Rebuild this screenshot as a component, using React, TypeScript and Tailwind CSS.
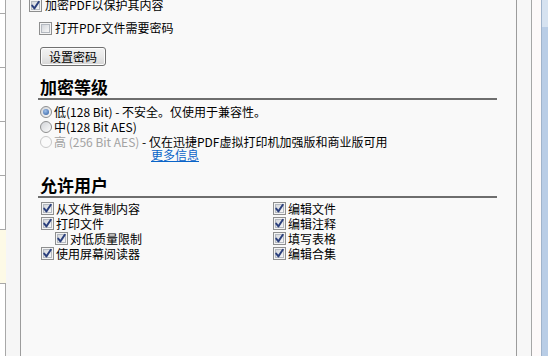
import type { ReactNode } from 'react';

function CheckBox({ checked = false }: { checked?: boolean }) {
  return (
    <span className="relative flex h-[13px] w-[13px] shrink-0 items-center justify-center border border-[#8e8f8f] bg-[#f4f4f4]">
      <span className="h-[9px] w-[9px] border border-[#b4b9c0] bg-gradient-to-br from-[#d4d7dc] to-[#f7f7f7]" />
      {checked && (
        <svg viewBox="0 0 13 13" className="absolute -left-px -top-px h-[13px] w-[13px]">
          <path d="M3.2 6.6 L5.4 9.4 L9.8 2.8" fill="none" stroke="#2a3f7c" strokeWidth="1.9" strokeLinecap="round" strokeLinejoin="round" />
        </svg>
      )}
    </span>
  );
}

function Radio({ selected = false, disabled = false }: { selected?: boolean; disabled?: boolean }) {
  return (
    <span
      className={
        disabled
          ? 'flex h-[12px] w-[12px] shrink-0 items-center justify-center rounded-full border border-[#c8c8c8] bg-[#fafafa]'
          : 'flex h-[12px] w-[12px] shrink-0 items-center justify-center rounded-full border border-[#8e8f8f] bg-gradient-to-br from-[#d2d4d8] to-[#fbfbfb]'
      }
    >
      {selected && (
        <span className="h-[6px] w-[6px] rounded-full bg-[radial-gradient(circle_at_40%_35%,#9fc0ea,#2b5a9e)]" />
      )}
    </span>
  );
}

function CheckRow({ children, className = '' }: { children: ReactNode; className?: string }) {
  return (
    <div className={`flex h-[15px] items-center gap-[2px] leading-[15px] ${className}`}>
      <CheckBox checked />
      <span>{children}</span>
    </div>
  );
}

function Heading({ children }: { children: ReactNode }) {
  return (
    <div>
      <div className="text-[17px] font-bold leading-[22px] text-black">{children}</div>
      <div className="-ml-[2px] h-[2px] w-[459px] bg-[#6e6e6e]" />
    </div>
  );
}

export default function App() {
  return (
    <div className="flex h-[356px] w-[548px] overflow-hidden bg-[#f6f6f6] font-['Noto_Sans_CJK_SC','Noto_Sans',sans-serif] text-[12px] text-black">
      {/* left list edge */}
      <div className="flex w-[6px] shrink-0 flex-col bg-white">
        <div className="h-[13px] border-r border-[#a8a8a8]" />
        <div className="h-[54px] border-r border-t border-[#a8a8a8]" />
        <div className="h-[54px] border-r border-t border-[#a8a8a8]" />
        <div className="h-[54px] border-r border-t border-[#a8a8a8]" />
        <div className="h-[54px] border-r border-t border-[#a8a8a8]" />
        <div className="h-[54px] border-t border-[#a8a8a8] bg-[#fdfae6]" />
        <div className="flex-1 border-r border-t border-[#a8a8a8]" />
      </div>
      <div className="w-[14px] shrink-0" />

      {/* main panel */}
      <div className="w-[497px] shrink-0 border-x border-[#9c9c9c] bg-[#f9f9f9]">
        <div className="flex flex-col pl-[19px]">
          <div className="-ml-[11px] -mt-[3px] flex h-[16px] items-center gap-[3px] leading-[16px]">
            <CheckBox checked />
            <span>加密PDF以保护其内容</span>
          </div>
          <div className="-ml-px mt-[7px] flex h-[16px] items-center gap-[3px] leading-[16px]">
            <CheckBox />
            <span>打开PDF文件需要密码</span>
          </div>
          <button className="mt-[11px] flex h-[19px] w-[66px] items-center justify-center rounded-[3px] border border-[#707070] bg-gradient-to-b from-[#f3f3f3] via-[#e9e9e9] to-[#d6d6d6] text-[12px] leading-[17px] shadow-[inset_0_0_0_1px_#fcfcfc]">
            设置密码
          </button>

          <div className="mt-[10px]">
            <Heading>加密等级</Heading>
          </div>

          <div className="mt-[4px] flex flex-col leading-[15px]">
            <div className="flex h-[15px] items-center gap-[2px]">
              <Radio selected />
              <span>低(128 Bit) - 不安全。仅使用于兼容性。</span>
            </div>
            <div className="flex h-[15px] items-center gap-[2px]">
              <Radio />
              <span>中(128 Bit AES)</span>
            </div>
            <div className="flex h-[15px] items-center gap-[2px]">
              <Radio disabled />
              <span>
                <span className="text-[#a3a3a3]">高 (256 Bit AES)</span> - 仅在迅捷PDF虚拟打印机加强版和商业版可用
              </span>
            </div>
            <div className="ml-[111px] h-[12px] leading-[12px]">
              <a href="#" className="text-[#0a64c8] underline">更多信息</a>
            </div>
          </div>

          <div className="mt-[13px]">
            <Heading>允许用户</Heading>
          </div>

          <div className="ml-px mt-[3px] grid grid-cols-[232px_1fr]">
            <div className="flex flex-col">
              <CheckRow>从文件复制内容</CheckRow>
              <CheckRow>打印文件</CheckRow>
              <CheckRow className="ml-[14px]">对低质量限制</CheckRow>
              <CheckRow>使用屏幕阅读器</CheckRow>
            </div>
            <div className="flex flex-col">
              <CheckRow>编辑文件</CheckRow>
              <CheckRow>编辑注释</CheckRow>
              <CheckRow>填写表格</CheckRow>
              <CheckRow>编辑合集</CheckRow>
            </div>
          </div>
        </div>
      </div>

      {/* right edge */}
      <div className="w-[14px] shrink-0 bg-[#f7f7f7]" />
      <div className="w-[10px] shrink-0 border-l border-[#a6a6a6] bg-[#fdf9f9]" />
      <div className="flex w-[7px] shrink-0 flex-col border-l border-[#9fb3cb]">
        <div className="h-[27px] bg-[#d6e2f0]" />
        <div className="flex-1 bg-[#b9cde6]" />
      </div>
    </div>
  );
}
